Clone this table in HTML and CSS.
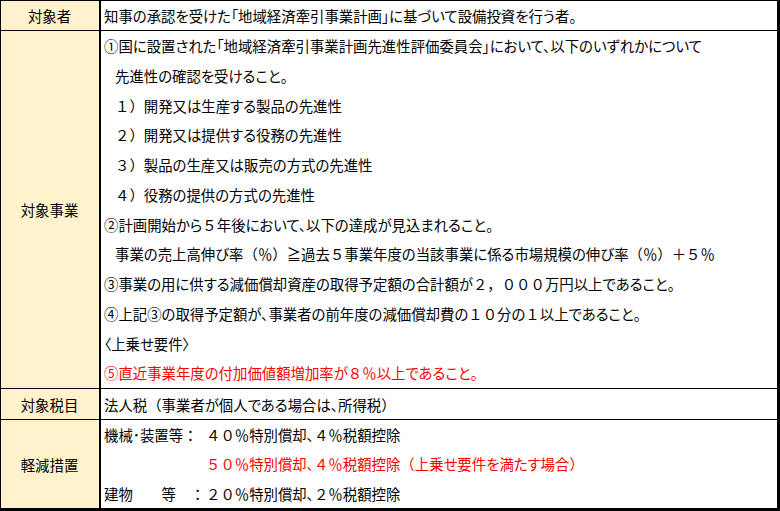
FILE: index.html
```html
<!DOCTYPE html>
<html lang="ja">
<head>
<meta charset="utf-8">
<link rel="stylesheet" href="styles.css">
</head>
<body>
<div class="tbl">
  <div class="row r1">
    <div class="head">対象者</div>
    <div class="body">知事の承認を受けた「地域経済牽引事業計画」に基づいて設備投資を行う者。</div>
  </div>
  <div class="row r2">
    <div class="head">対象事業</div>
    <div class="body lines">
      <div>①国に設置された「地域経済牽引事業計画先進性評価委員会」において、以下のいずれかについて</div>
      <div class="ind1">先進性の確認を受けること。</div>
      <div class="ind1"><span class="fw">１）</span>開発又は生産する製品の先進性</div>
      <div class="ind1"><span class="fw">２）</span>開発又は提供する役務の先進性</div>
      <div class="ind1"><span class="fw">３）</span>製品の生産又は販売の方式の先進性</div>
      <div class="ind1"><span class="fw">４）</span>役務の提供の方式の先進性</div>
      <div>②計画開始から<span class="fw">５</span>年後において、以下の達成が見込まれること。</div>
      <div class="ind1">事業の売上高伸び率<span class="fw">（％）≧</span>過去<span class="fw">５</span>事業年度の当該事業に係る市場規模の伸び率<span class="fw">（％）＋５％</span></div>
      <div>③事業の用に供する減価償却資産の取得予定額の合計額が<span class="fw">２，０００</span>万円以上であること。</div>
      <div>④上記③の取得予定額が、事業者の前年度の減価償却費の<span class="fw">１０</span>分の<span class="fw">１</span>以上であること。</div>
      <div>〈上乗せ要件〉</div>
      <div class="red">⑤直近事業年度の付加価値額増加率が<span class="fw">８％</span>以上であること。</div>
    </div>
  </div>
  <div class="row r3">
    <div class="head">対象税目</div>
    <div class="body">法人税<span class="fw">（</span>事業者が個人である場合は、所得税<span class="fw">）</span></div>
  </div>
  <div class="row r4">
    <div class="head">軽減措置</div>
    <div class="body measures">
      <div class="lbl">機械･装置等<span class="fw">：</span></div><div><span class="fw">４０％</span>特別償却、<span class="fw">４％</span>税額控除</div>
      <div class="lbl"></div><div class="red"><span class="fw">５０％</span>特別償却、<span class="fw">４％</span>税額控除<span class="fw">（</span>上乗せ要件を満たす場合<span class="fw">）</span></div>
      <div class="lbl">建物<span class="fw">　　</span>等<span class="fw">　：</span></div><div><span class="fw">２０％</span>特別償却、<span class="fw">２％</span>税額控除</div>
    </div>
  </div>
</div>
</body>
</html>
```

FILE: styles.css
```css
* { box-sizing: border-box; }
html, body {
  margin: 0;
  padding: 0;
  background: #fff;
}
body {
  font-family: "Noto Sans CJK JP", sans-serif;
  font-size: 14.4px;
  color: #000;
  font-feature-settings: "palt";
}
.fw { font-feature-settings: normal; }
.tbl {
  width: 780px;
  height: 511px;
  border-style: solid;
  border-color: #000;
  border-width: 1px 3px 3px 1px;
  display: flex;
  flex-direction: column;
}
.row {
  display: flex;
  border-bottom: 1px solid #000;
}
.row.r4 { border-bottom: none; }
.r1 { height: 30px; }
.r2 { height: 358px; }
.r3 { height: 31px; }
.r4 { height: 88px; }
.head {
  width: 100px;
  flex: none;
  background: #fff2cc;
  border-right: 2px solid #000;
  display: flex;
  align-items: center;
  justify-content: center;
  padding-right: 1px;
}
.body {
  flex: 1;
  padding-left: 3px;
  display: flex;
  align-items: center;
  white-space: nowrap;
}
.lines {
  flex-direction: column;
  align-items: flex-start;
  justify-content: center;
  line-height: 29.75px;
}
.ind1 { padding-left: 11px; }
.red { color: #ff0000; }
.measures {
  display: grid;
  grid-template-columns: 102px auto;
  grid-auto-rows: 29.33px;
  align-content: center;
  align-items: center;
  justify-content: start;
}
.lbl { white-space: nowrap; }
```
